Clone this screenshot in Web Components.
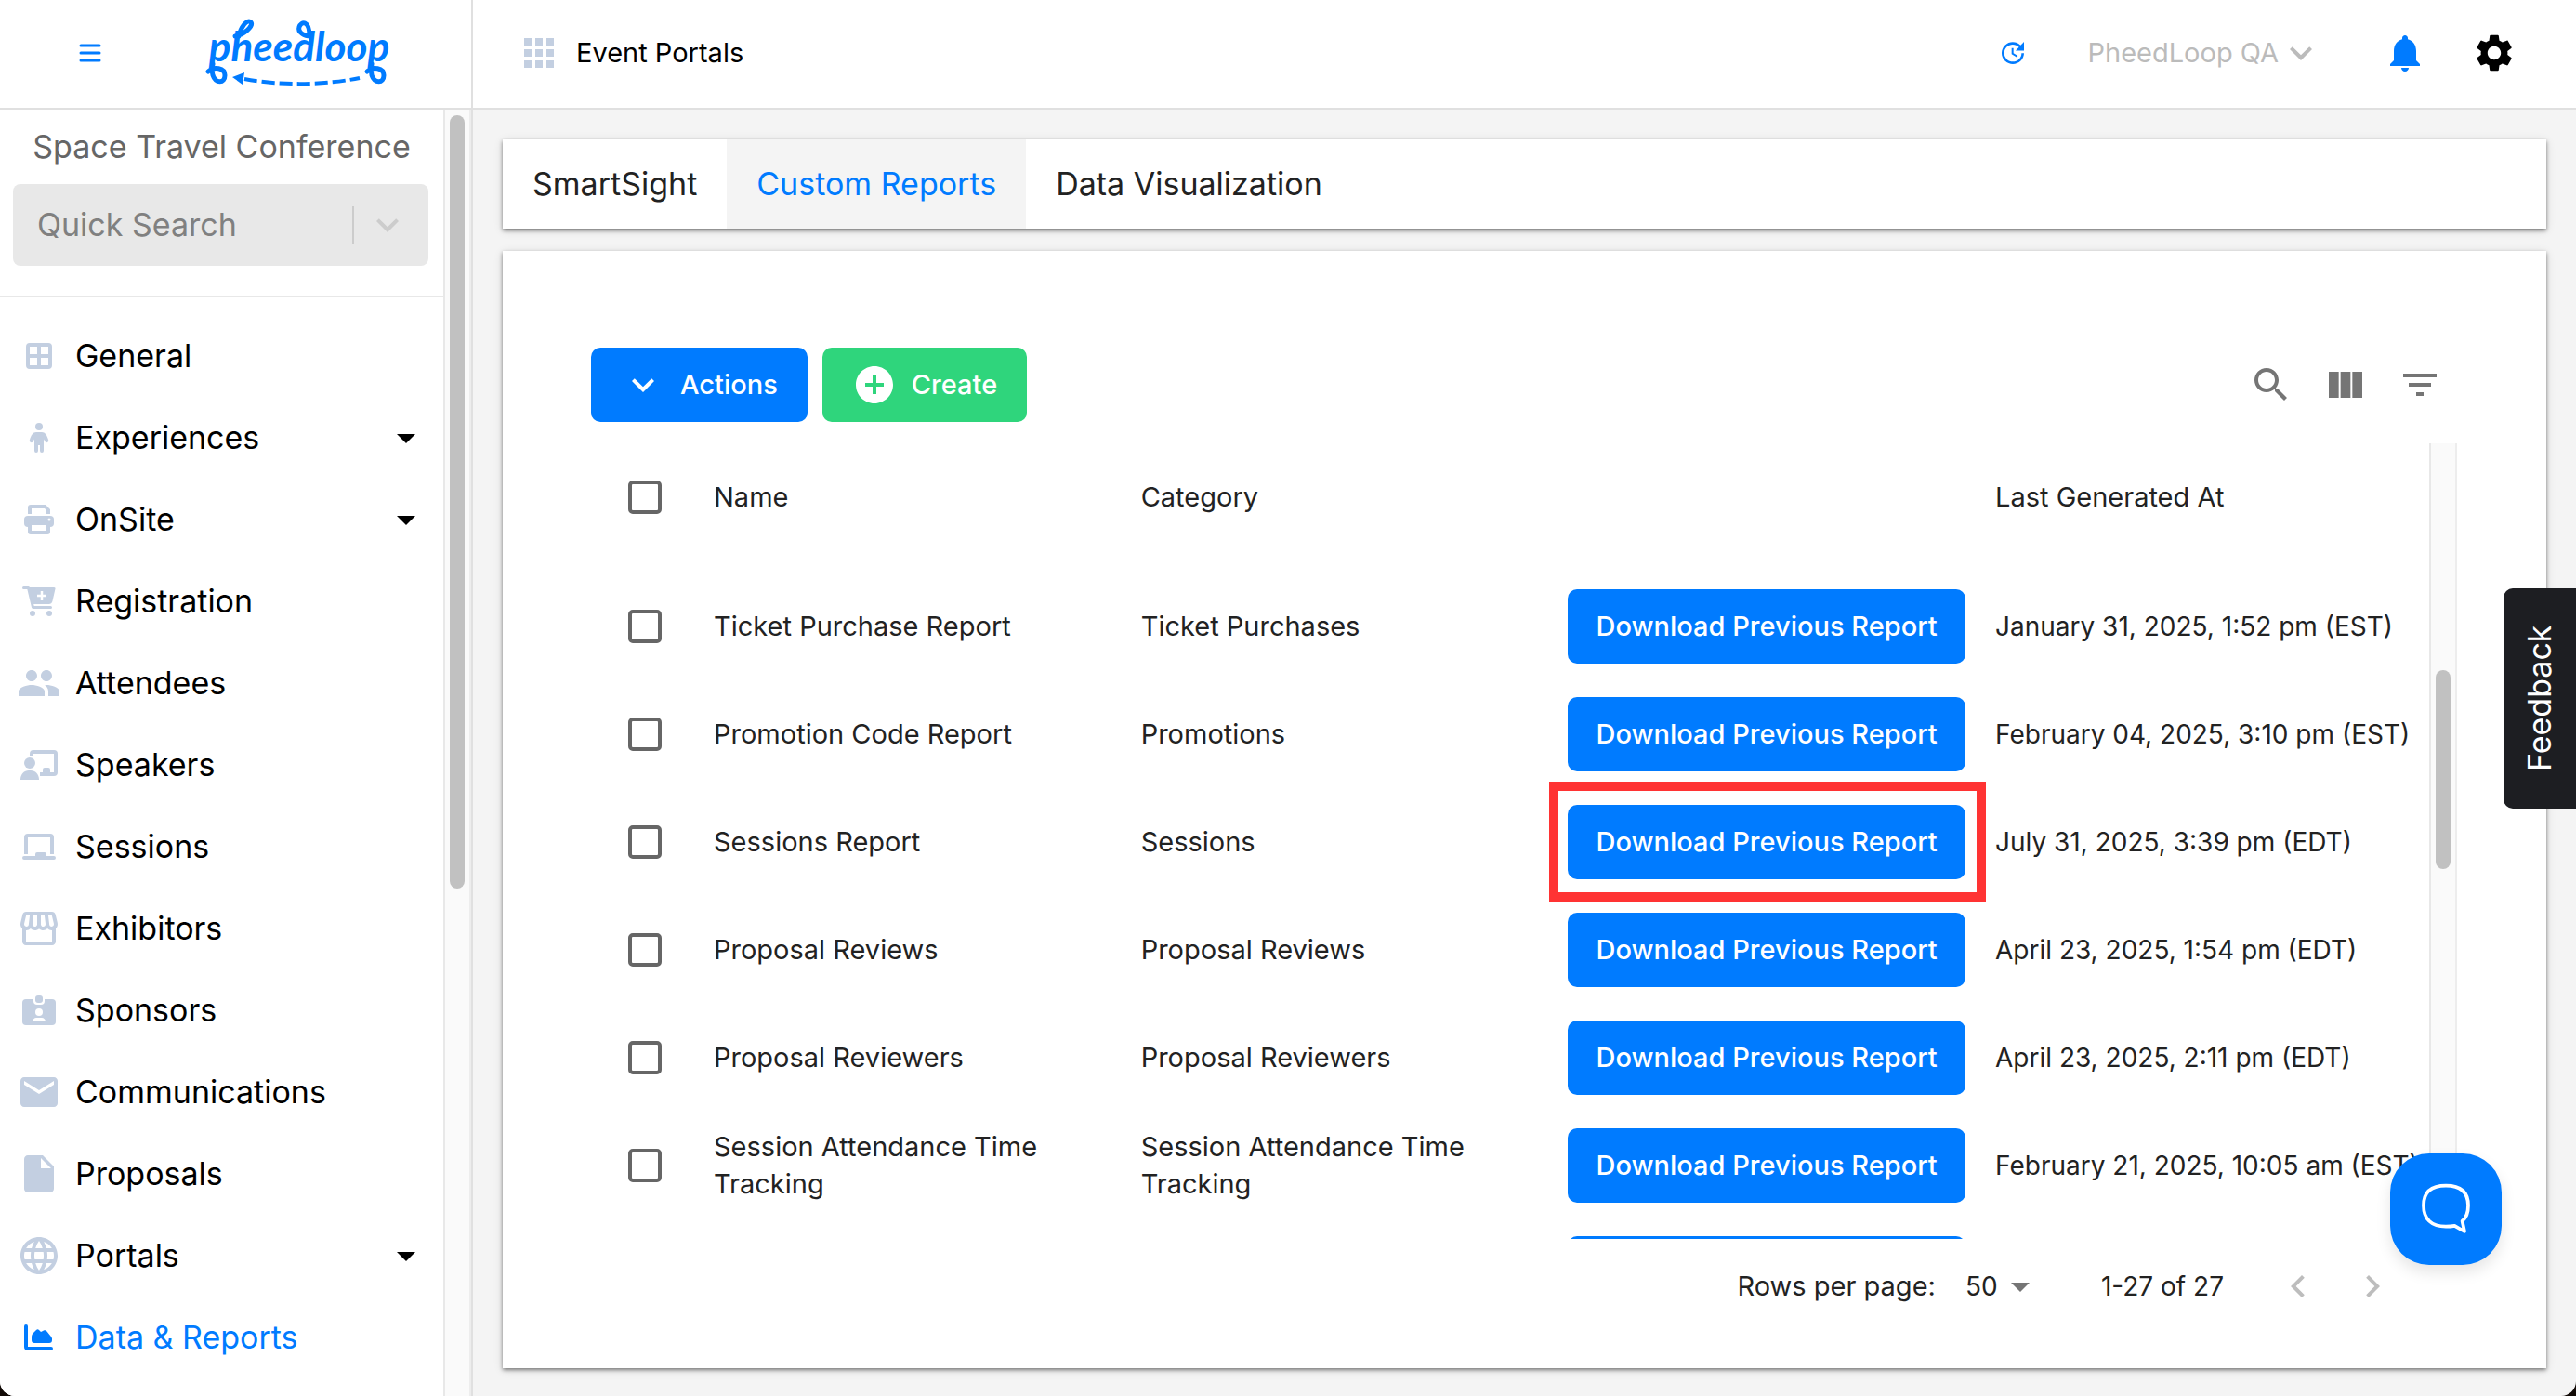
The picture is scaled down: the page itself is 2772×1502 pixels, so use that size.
<!DOCTYPE html>
<html lang="en">
<head>
<meta charset="utf-8">
<meta name="viewport" content="width=device-width, initial-scale=1">
<title>Custom Reports</title>
<style>
html, body{
    margin: 0;
    height: 100%;
    background: #120a06;
}
body{
    font-family: Inter, "Open Sans", sans-serif;
    font-size: 29px;
    line-height: 40px;
    color: #222;
    --blue: #007bff;
    --green: #2fd57c;
    --line: #e0e0e0;
    --muted: #c3cfe1;
}
</style>
</head>
<body>
<event-app></event-app>

<script>
const icons = {
    menu: '<path d="M2 4h20M2 12h20M2 20h20" stroke="currentColor" stroke-width="3" stroke-linecap="round"/>',
    general: '<g transform="scale(.5)" fill="none" stroke="currentColor" stroke-width="4"><rect x="12" y="12" width="24" height="24" rx="2"/><path d="M24 12v24M12 24h24"/></g>',
    person: '<g transform="scale(.5)"><circle cx="24" cy="12" r="4"/><path d="M21 18h6c3.500 0 5.500 3 7 8a2 2 0 0 1-3.400 2.200L29 25.500V38a2 2 0 0 1-4 0v-6h-2v6a2 2 0 0 1-4 0V25.500l-1.600 2.700a2 2 0 0 1-3.400-2.200c1.500-5 3.500-8 7-8z"/></g>',
    printer: '<g transform="scale(.5)"><path d="M12 18v-7a3 3 0 0 1 3-3h16l5 5v5h-4v-4l-2-2H16v6z"/><rect x="8" y="20" width="32" height="12" rx="4"/><rect x="12" y="26" width="24" height="14" rx="3"/><path d="M16 30h16v6H16z" fill="#fff"/><circle cx="35" cy="24" r="1.500" fill="#fff"/></g>',
    cart: '<g transform="scale(.5)"><path d="M7.500 9.500h5l5 21h19" fill="none" stroke="currentColor" stroke-width="3" stroke-linecap="round" stroke-linejoin="round"/><path d="M12 9h28a1.500 1.500 0 0 1 1.400 2l-3 13a4 4 0 0 1-4 3H16z"/><path d="M27 13v10M22 18h10" stroke="#fff" stroke-width="2.500"/><circle cx="17" cy="37" r="3"/><circle cx="35" cy="37" r="3"/></g>',
    people: '<path d="M16 11c1.660 0 2.990-1.340 2.990-3S17.660 5 16 5c-1.660 0-3 1.340-3 3s1.340 3 3 3zm-8 0c1.660 0 2.990-1.340 2.990-3S9.660 5 8 5C6.340 5 5 6.340 5 8s1.340 3 3 3zm0 2c-2.330 0-7 1.170-7 3.500V19h14v-2.500c0-2.330-4.670-3.500-7-3.500zm8 0c-.29 0-.62.02-.97.05 1.160.84 1.970 1.970 1.970 3.450V19h6v-2.500c0-2.330-4.670-3.500-7-3.500z"/>',
    speaker: '<g transform="scale(.5)"><path d="M16 14v-2a2 2 0 0 1 2-2h22a2 2 0 0 1 2 2v20a2 2 0 0 1-2 2H25" fill="none" stroke="currentColor" stroke-width="4"/><path d="M28 33v-4a2 2 0 0 1 2-2h4a2 2 0 0 1 2 2v4z"/><circle cx="14" cy="22" r="6"/><path d="M4 40c0-6 4-10 9-10h2c5 0 9 4 9 10z"/></g>',
    laptop: '<g transform="scale(.5)"><path d="M10 32V14a2 2 0 0 1 2-2h24a2 2 0 0 1 2 2v18M8 36h32" fill="none" stroke="currentColor" stroke-width="4"/><path d="M8 34h32a2 2 0 0 1 0 4H8a2 2 0 0 1 0-4zM20 35v-3a2 2 0 0 1 2-2h8a2 2 0 0 1 2 2v3z"/></g>',
    store: '<path d="M21.900 8.890l-1.050-4.370c-.22-.9-1-1.520-1.910-1.520H5.050c-.9 0-1.690.63-1.900 1.520L2.100 8.890c-.24 1.020-.02 2.060.62 2.880.08.11.19.19.28.29V19c0 1.100.9 2 2 2h14c1.100 0 2-.9 2-2v-6.940c.09-.09.2-.18.28-.28.64-.82.87-1.870.62-2.890zm-2.990-3.900l1.050 4.370c.1.42.01.84-.25 1.170-.14.18-.44.47-.94.47-.61 0-1.140-.49-1.210-1.140L16.980 5l1.930-.01zM13 5h1.960l.54 4.520c.05.39-.07.78-.33 1.070-.22.26-.54.41-.95.41-.67 0-1.220-.59-1.220-1.310V5zM8.490 9.520L9.040 5H11v4.690c0 .72-.55 1.310-1.290 1.310-.34 0-.65-.15-.89-.41-.25-.29-.37-.68-.33-1.070zm-4.450-.16L5.050 5h1.970l-.58 4.860c-.08.65-.6 1.140-1.210 1.140-.49 0-.8-.29-.93-.47-.27-.32-.36-.75-.26-1.170zM5 19v-6.030c.08.01.15.03.23.03.87 0 1.660-.36 2.240-.95.6.6 1.400.95 2.310.95.87 0 1.650-.36 2.230-.93.59.57 1.390.93 2.290.93.84 0 1.640-.35 2.240-.95.58.59 1.370.95 2.240.95.08 0 .15-.02.23-.03V19H5z"/>',
    badge: '<g transform="scale(.5)"><rect x="6" y="12" width="36" height="28" rx="4"/><rect x="18" y="8" width="12" height="10" rx="4" fill="#fff"/><rect x="20" y="8" width="8" height="8" rx="3"/><circle cx="24" cy="26" r="4" fill="#fff"/><path d="M17 36c0-2 2-4 4-4h6c2 0 4 2 4 4z" fill="#fff"/></g>',
    mail: '<path d="M20 4H4c-1.100 0-1.990.9-1.990 2L2 18c0 1.100.9 2 2 2h16c1.100 0 2-.9 2-2V6c0-1.100-.9-2-2-2zm0 4l-8 5-8-5V6l8 5 8-5v2z"/>',
    file: '<path d="M6 2c-1.100 0-1.990.9-1.990 2L4 20c0 1.100.89 2 1.990 2H18c1.100 0 2-.9 2-2V8l-6-6H6zm7 7V3.500L18.500 9H13z"/>',
    globe: '<path d="M11.990 2C6.470 2 2 6.480 2 12s4.470 10 9.990 10C17.520 22 22 17.520 22 12S17.520 2 11.990 2zm6.930 6h-2.950c-.32-1.250-.78-2.450-1.380-3.560 1.840.63 3.370 1.910 4.330 3.560zM12 4.040c.83 1.200 1.480 2.530 1.910 3.960h-3.820c.43-1.430 1.080-2.760 1.910-3.960zM4.260 14C4.100 13.360 4 12.690 4 12s.1-1.360.26-2h3.380c-.08.66-.14 1.320-.14 2 0 .68.06 1.340.14 2H4.260zm.82 2h2.950c.32 1.250.78 2.450 1.380 3.560-1.840-.63-3.370-1.900-4.330-3.560zm2.950-8H5.080c.96-1.660 2.490-2.930 4.330-3.560C8.810 5.550 8.350 6.750 8.030 8zM12 19.960c-.83-1.200-1.480-2.530-1.910-3.960h3.820c-.43 1.430-1.080 2.760-1.910 3.960zM14.340 14H9.660c-.09-.66-.16-1.320-.16-2 0-.68.07-1.350.16-2h4.680c.09.65.16 1.320.16 2 0 .68-.07 1.340-.16 2zm.25 5.560c.6-1.110 1.060-2.310 1.380-3.560h2.950c-.96 1.650-2.490 2.930-4.330 3.560zM16.360 14c.08-.66.14-1.320.14-2 0-.68-.06-1.340-.14-2h3.380c.16.64.26 1.310.26 2s-.1 1.360-.26 2h-3.380z"/>',
    chart: '<g transform="scale(.5)"><path d="M10 12v22a2 2 0 0 0 2 2h25" fill="none" stroke="currentColor" stroke-width="4" stroke-linecap="round"/><path d="M16 27v-4c0-1 .5-2 1-3l4-4c1-1 2-1 3 0l2 2 3-1.500c1-.5 2.500-.3 3.500 1l4 5c.8 1 1.500 2 1.500 3v1.500a3 3 0 0 1-3 3H19a3 3 0 0 1-3-3z"/></g>',
    caret: '<path d="M7 10l5 5 5-5z"/>',
    grid: '<path d="M4 4h4v4H4zM10 4h4v4h-4zM16 4h4v4h-4zM4 10h4v4H4zM10 10h4v4h-4zM16 10h4v4h-4zM4 16h4v4H4zM10 16h4v4h-4zM16 16h4v4h-4z"/>',
    update: '<path d="M21 10.120h-6.780l2.740-2.820c-2.730-2.700-7.150-2.800-9.880-.1-2.730 2.710-2.730 7.080 0 9.790s7.150 2.710 9.880 0C18.320 15.650 19 14.080 19 12.100h2c0 1.980-.88 4.550-2.640 6.290-3.510 3.480-9.210 3.480-12.720 0-3.500-3.470-3.530-9.110-.02-12.580s9.140-3.470 12.650 0L21 3v7.120zM12.500 8v4.250l3.500 2.080-.72 1.210L11 13V8h1.500z"/>',
    expand: '<path d="M16.590 8.590L12 13.170 7.410 8.590 6 10l6 6 6-6z"/>',
    bell: '<path d="M12 22c1.100 0 2-.9 2-2h-4c0 1.100.89 2 2 2zm6-6v-5c0-3.070-1.640-5.640-4.500-6.320V4c0-.83-.67-1.500-1.500-1.500s-1.500.67-1.500 1.500v.68C7.630 5.360 6 7.920 6 11v5l-2 2v1h16v-1l-2-2z"/>',
    gear: '<path d="M19.140 12.940c.04-.3.06-.61.06-.94 0-.32-.02-.64-.07-.94l2.030-1.580c.18-.14.23-.41.12-.61l-1.920-3.320c-.12-.22-.37-.29-.59-.22l-2.390.96c-.5-.38-1.030-.7-1.620-.94l-.36-2.540c-.04-.24-.24-.41-.48-.41h-3.840c-.24 0-.43.17-.47.41l-.36 2.540c-.59.24-1.130.57-1.620.94l-2.390-.96c-.22-.08-.47 0-.59.22L2.740 8.870c-.12.21-.08.47.12.61l2.030 1.580c-.05.3-.09.63-.09.94s.02.64.07.94l-2.030 1.580c-.18.14-.23.41-.12.61l1.920 3.320c.12.22.37.29.59.22l2.390-.96c.5.38 1.030.7 1.620.94l.36 2.540c.05.24.24.41.48.41h3.840c.24 0 .44-.17.47-.41l.36-2.540c.59-.24 1.130-.56 1.620-.94l2.390.96c.22.08.47 0 .59-.22l1.920-3.320c.12-.22.07-.47-.12-.61l-2.010-1.580zM12 15.600c-1.980 0-3.600-1.620-3.600-3.600s1.620-3.600 3.600-3.600 3.600 1.620 3.600 3.600-1.620 3.600-3.600 3.600z"/>',
    plus: '<path d="M12 2C6.480 2 2 6.480 2 12s4.480 10 10 10 10-4.480 10-10S17.520 2 12 2zm5 11h-4v4h-2v-4H7v-2h4V7h2v4h4v2z"/>',
    search: '<path d="M15.500 14h-.79l-.28-.27C15.410 12.590 16 11.110 16 9.500 16 5.910 13.090 3 9.500 3S3 5.910 3 9.500 5.910 16 9.500 16c1.610 0 3.090-.59 4.230-1.570l.27.28v.79l5 4.990L20.490 19l-4.990-5zm-6 0C7.010 14 5 11.990 5 9.500S7.010 5 9.500 5 14 7.010 14 9.500 11.990 14 9.500 14z"/>',
    columns: '<path d="M14.670 5v14H9.330V5h5.340zm1 14H21V5h-5.330v14zm-7.340 0V5H3v14h5.330z"/>',
    filter: '<path d="M10 18h4v-2h-4v2zM3 6v2h18V6H3zm3 7h12v-2H6v2z"/>',
    prev: '<path d="M15.410 7.410L14 6l-6 6 6 6 1.410-1.410L10.830 12z"/>',
    next: '<path d="M10 6L8.590 7.410 13.170 12l-4.580 4.590L10 18l6-6z"/>',
    chat: '<path d="M12 2.500c6 0 9 2.600 9 8 0 3-.8 5-2.400 6.300l.9 4.200-4-2.300c-1 .2-2.200.3-3.500.3-6 0-9-3.100-9-8.500s3-8 9-8z" fill="none" stroke="currentColor" stroke-width="1.400" stroke-linejoin="round"/>'
}

const reset = `
*{ box-sizing: border-box; }
button, input, select{
    font: inherit;
    color: inherit;
    border: 0;
    margin: 0;
    padding: 0;
    background: none;
}
button{ cursor: pointer; }
a{
    color: inherit;
    text-decoration: none;
}
`

class BaseElement extends HTMLElement {
    constructor() {
        super()
        this.attachShadow({ mode: 'open' })
    }

    draw(style, markup) {
        this.shadowRoot.innerHTML = `<style>${reset}${style}</style>${markup}`
    }
}

class AppIcon extends BaseElement {
    connectedCallback() {
        const size = this.getAttribute('size') || 48
        this.draw(`
        :host{
            display: block;
            flex: none;
            width: ${size}px;
            height: ${size}px;
        }
        svg{ display: block; }
        `, `<svg width="${size}" height="${size}" viewBox="0 0 24 24" fill="currentColor" aria-hidden="true">${icons[this.getAttribute('name')]}</svg>`)
    }
}

class AppLogo extends BaseElement {
    connectedCallback() {
        this.draw(`
        :host{
            display: block;
            color: var(--blue);
        }
        svg{ display: block; }
        text{
            font-family: Lato, sans-serif;
            font-size: 44px;
            font-weight: 700;
            font-style: italic;
        }
        `, `
        <svg width="200" height="74" viewBox="0 0 200 74" fill="currentColor">
            <text x="101" y="46" text-anchor="middle">pheedloop</text>
            <g fill="none" stroke="currentColor" stroke-width="5" stroke-linecap="round" stroke-linejoin="round">
                <path d="M3 57c6-6 18-4 18 4 0 9-10 9-13 0-1-4-1-8 0-12"/>
                <path d="M174 57c6-6 18-4 18 4 0 9-10 9-13 0-1-4-1-8 0-12"/>
                <path d="M32 19c9-1 20-11 17-15-4-4-11 5-13 15"/>
                <path d="M113 19c-6 0-14-4-12-10s11-8 11 10"/>
                <path d="M42 65c38 7 84 7 124-1" stroke-width="4" stroke-linecap="butt" stroke-dasharray="14 5"/>
            </g>
            <path d="M29 63l13-5-2 13z"/>
        </svg>`)
    }
}

class ScrollTrack extends BaseElement {
    connectedCallback() {
        this.draw(`
        :host{
            display: grid;
            grid-template-rows: var(--before) var(--thumb) 1fr;
            justify-items: center;
            flex: none;
            box-sizing: border-box;
            width: 30px;
            background: #fafafa;
            border-left: 2px solid #e8e8e8;
            border-right: 2px solid #ededed;
        }
        .thumb{
            grid-row: 2;
            width: 16px;
            border-radius: 8px;
            background: #c1c1c1;
        }
        `, `<div class="thumb"></div>`)
    }
}

class NavItem extends BaseElement {
    connectedCallback() {
        const caret = this.hasAttribute('group') ? '<app-icon name="caret" class="caret"></app-icon>' : ''
        this.draw(`
        :host{
            display: block;
            color: #000;
            font-size: 34px;
        }
        a{
            display: flex;
            align-items: center;
            gap: 15px;
            height: 88px;
            padding: 0 16px 0 18px;
        }
        .icon{ color: var(--muted); }
        .caret{ margin-left: auto; }
        :host([active]), :host([active]) .icon{ color: var(--blue); }
        `, `<a href="#"><app-icon class="icon" name="${this.getAttribute('icon')}"></app-icon><slot></slot>${caret}</a>`)
    }
}

class AppSidebar extends BaseElement {
    connectedCallback() {
        this.draw(`
        :host{
            display: flex;
            min-height: 0;
            background: #fff;
            border-right: 2px solid var(--line);
            overflow: hidden;
        }
        .content{
            flex: 1;
            min-width: 0;
        }
        h2{
            margin: 0;
            font-size: 34px;
            font-weight: 400;
            line-height: 80px;
            text-align: center;
            color: #666;
        }
        .search{
            display: flex;
            align-items: center;
            height: 88px;
            margin: 0 16px 32px 14px;
            padding: 0 20px 0 26px;
            border-radius: 8px;
            background: #e8e8e8;
            color: #ccc;
            font-size: 34px;
        }
        input{
            flex: 1;
            min-width: 0;
            outline: 0;
            color: #808080;
        }
        input::placeholder{
            color: #808080;
            opacity: 1;
        }
        .divider{
            width: 2px;
            height: 40px;
            margin-right: 12px;
            background: #ccc;
        }
        nav{
            padding-top: 19px;
            border-top: 2px solid #e8e8e8;
        }
        scroll-track{
            --before: 6px;
            --thumb: 832px;
        }
        `, `
        <div class="content">
            <h2>Space Travel Conference</h2>
            <div class="search">
                <input type="text" placeholder="Quick Search" aria-label="Quick Search">
                <span class="divider"></span>
                <app-icon name="expand"></app-icon>
            </div>
            <nav>
                <nav-item icon="general">General</nav-item>
                <nav-item icon="person" group>Experiences</nav-item>
                <nav-item icon="printer" group>OnSite</nav-item>
                <nav-item icon="cart">Registration</nav-item>
                <nav-item icon="people">Attendees</nav-item>
                <nav-item icon="speaker">Speakers</nav-item>
                <nav-item icon="laptop">Sessions</nav-item>
                <nav-item icon="store">Exhibitors</nav-item>
                <nav-item icon="badge">Sponsors</nav-item>
                <nav-item icon="mail">Communications</nav-item>
                <nav-item icon="file">Proposals</nav-item>
                <nav-item icon="globe" group>Portals</nav-item>
                <nav-item icon="chart" active>Data &amp; Reports</nav-item>
            </nav>
        </div>
        <scroll-track></scroll-track>`)
    }
}

class AppHeader extends BaseElement {
    connectedCallback() {
        this.draw(`
        :host{
            display: grid;
            grid-template-columns: 509px 1fr;
            height: 118px;
            background: #fff;
            border-bottom: 2px solid var(--line);
            box-sizing: border-box;
        }
        .brand{
            display: flex;
            align-items: center;
            gap: 112px;
            padding: 0 0 2px 85px;
            border-right: 2px solid var(--line);
        }
        .bar{
            display: flex;
            align-items: center;
            padding: 0 64px 2px 47px;
        }
        .portals{
            display: flex;
            align-items: center;
            gap: 16px;
            color: #000;
        }
        .portals app-icon{ color: var(--muted); }
        .menu, .refresh, .bell{ color: var(--blue); }
        .refresh{ margin: 0 64px 0 auto; }
        .account{
            display: flex;
            align-items: center;
            margin-right: 64px;
            color: #bbb;
        }
        .bell{ margin-right: 48px; }
        .gear{ color: #000; }
        `, `
        <div class="brand">
            <button class="menu" aria-label="Menu"><app-icon name="menu" size="24"></app-icon></button>
            <app-logo></app-logo>
        </div>
        <div class="bar">
            <a class="portals" href="#"><app-icon name="grid"></app-icon>Event Portals</a>
            <button class="refresh" aria-label="Refresh"><app-icon name="update" size="32"></app-icon></button>
            <button class="account">PheedLoop QA<app-icon name="expand"></app-icon></button>
            <button class="bell" aria-label="Notifications"><app-icon name="bell"></app-icon></button>
            <button class="gear" aria-label="Settings"><app-icon name="gear"></app-icon></button>
        </div>`)
    }
}

class TabBar extends BaseElement {
    connectedCallback() {
        this.draw(`
        :host{
            display: flex;
            height: 96px;
            flex: none;
            background: #fff;
            font-size: 34px;
            box-shadow: 0 2px 4px rgba(0,0,0,.45), 0 2px 10px rgba(0,0,0,.12);
        }
        a{
            display: flex;
            align-items: center;
            padding: 0 32px;
        }
        .active{
            color: var(--blue);
            background: #f4f4f4;
        }
        `, `
        <a href="#">SmartSight</a>
        <a href="#" class="active">Custom Reports</a>
        <a href="#">Data Visualization</a>`)
    }
}

class AppButton extends BaseElement {
    connectedCallback() {
        const icon = this.getAttribute('icon')
        const label = this.getAttribute('label')
        this.draw(`
        :host{
            display: block;
            font-weight: 500;
        }
        button{
            display: flex;
            align-items: center;
            justify-content: center;
            gap: 16px;
            width: 100%;
            height: 80px;
            padding: 0 32px;
            border-radius: 10px;
            background: var(--blue);
            color: #fff;
            white-space: nowrap;
        }
        :host([color="green"]) button{ background: var(--green); }
        `, `<button ${label ? `aria-label="${label}"` : ''}>${icon ? `<app-icon name="${icon}"></app-icon>` : ''}<slot></slot></button>`)
    }
}

class ReportToolbar extends BaseElement {
    connectedCallback() {
        this.draw(`
        :host{
            display: flex;
            align-items: center;
            gap: 16px;
        }
        .tools{
            display: flex;
            margin-left: auto;
            color: #757575;
        }
        .tools button{ padding: 16px; }
        `, `
        <app-button icon="expand">Actions</app-button>
        <app-button icon="plus" color="green">Create</app-button>
        <div class="tools">
            <button aria-label="Search"><app-icon name="search"></app-icon></button>
            <button aria-label="View Columns"><app-icon name="columns"></app-icon></button>
            <button aria-label="Filter Table"><app-icon name="filter"></app-icon></button>
        </div>`)
    }
}

const reports = [
    ['Ticket Purchase Report', 'Ticket Purchases', 'January 31, 2025, 1:52 pm (EST)'],
    ['Promotion Code Report', 'Promotions', 'February 04, 2025, 3:10 pm (EST)'],
    ['Sessions Report', 'Sessions', 'July 31, 2025, 3:39 pm (EDT)', true],
    ['Proposal Reviews', 'Proposal Reviews', 'April 23, 2025, 1:54 pm (EDT)'],
    ['Proposal Reviewers', 'Proposal Reviewers', 'April 23, 2025, 2:11 pm (EDT)'],
    ['Session Attendance Time Tracking', 'Session Attendance Time Tracking', 'February 21, 2025, 10:05 am (EST)']
]

class ReportTable extends BaseElement {
    connectedCallback() {
        const rows = reports.map(([name, category, date, marked]) => `
            <tr>
                <td class="check"><input type="checkbox" aria-label="Select ${name}"></td>
                <td>${name}</td>
                <td>${category}</td>
                <td class="action"><div class="${marked ? 'marked' : ''}"><app-button>Download Previous Report</app-button></div></td>
                <td class="date">${date}</td>
            </tr>`).join('')
        this.draw(`
        :host{
            display: flex;
            min-height: 0;
        }
        .scroller{
            flex: 1;
            min-width: 0;
            overflow: hidden;
        }
        table{
            width: 100%;
            table-layout: fixed;
            border-collapse: collapse;
        }
        .check-col{ width: 100px; }
        .date-col{ width: 499px; }
        th{
            height: 139px;
            padding: 0 0 24px 32px;
            font-weight: 400;
            text-align: left;
        }
        td{
            height: 116px;
            padding: 0 32px;
        }
        th.check, td.check{
            padding-left: 40px;
            padding-right: 0;
        }
        td.action{ padding-right: 0; }
        td.date{
            padding-right: 0;
            font-size: 28px;
            white-space: nowrap;
        }
        input{
            display: block;
            appearance: none;
            width: 36px;
            height: 36px;
            border: 4px solid #666;
            border-radius: 5px;
        }
        .marked{ position: relative; }
        .marked::after{
            content: "";
            position: absolute;
            inset: -25px -22px -24px -20px;
            border: 10px solid #f33;
            pointer-events: none;
        }
        scroll-track{
            --before: 244px;
            --thumb: 214px;
        }
        `, `
        <div class="scroller">
            <table>
                <colgroup><col class="check-col"><col><col><col><col class="date-col"></colgroup>
                <thead>
                    <tr>
                        <th class="check"><input type="checkbox" aria-label="Select all"></th>
                        <th>Name</th>
                        <th>Category</th>
                        <th></th>
                        <th>Last Generated At</th>
                    </tr>
                </thead>
                <tbody>
                    ${rows}
                    <tr>
                        <td></td>
                        <td></td>
                        <td></td>
                        <td class="action"><app-button label="Download"></app-button></td>
                        <td></td>
                    </tr>
                </tbody>
            </table>
        </div>
        <scroll-track></scroll-track>`)
    }
}

class TablePager extends BaseElement {
    connectedCallback() {
        this.draw(`
        :host{
            display: flex;
            align-items: center;
            justify-content: flex-end;
            height: 102px;
            padding-right: 51px;
        }
        .size{
            display: grid;
            align-items: center;
            margin: 0 63px 0 32px;
        }
        select, .size app-icon{ grid-area: 1 / 1; }
        select{
            appearance: none;
            height: 48px;
            padding-right: 48px;
            outline: 0;
        }
        .size app-icon{
            justify-self: end;
            color: #757575;
            pointer-events: none;
        }
        .size, .range{ font-size: 28px; }
        .range{ margin-right: 40px; }
        button{
            padding: 16px;
            color: #bdbdbd;
        }
        `, `
        <label for="size">Rows per page:</label>
        <div class="size">
            <select id="size"><option>50</option></select>
            <app-icon name="caret"></app-icon>
        </div>
        <span class="range">1-27 of 27</span>
        <button aria-label="Previous page" disabled><app-icon name="prev"></app-icon></button>
        <button aria-label="Next page" disabled><app-icon name="next"></app-icon></button>`)
    }
}

class FeedbackTab extends BaseElement {
    connectedCallback() {
        this.draw(`
        :host{
            position: fixed;
            right: 0;
            top: 633px;
            z-index: 5;
        }
        button{
            width: 78px;
            height: 237px;
            border-radius: 0 10px 10px 0;
            background: #1d1e22;
            color: #fff;
            font-size: 34px;
            writing-mode: vertical-rl;
            transform: rotate(180deg);
        }
        `, `<button>Feedback</button>`)
    }
}

class ChatLauncher extends BaseElement {
    connectedCallback() {
        this.draw(`
        :host{
            position: fixed;
            right: 80px;
            bottom: 141px;
            z-index: 6;
        }
        button{
            display: grid;
            place-items: center;
            width: 120px;
            height: 120px;
            border-radius: 42px;
            background: var(--blue);
            color: #fff;
            box-shadow: 0 8px 16px rgba(0,0,0,.1);
        }
        `, `<button aria-label="Chat"><app-icon name="chat" size="64"></app-icon></button>`)
    }
}

class EventApp extends BaseElement {
    connectedCallback() {
        this.draw(`
        :host{
            display: grid;
            grid-template-columns: 509px 1fr;
            grid-template-rows: 118px 1fr;
            height: 100vh;
            background: #f4f4f4;
            border-radius: 0 0 16px 16px;
            overflow: hidden;
        }
        app-header{ grid-column: 1 / -1; }
        main{
            display: flex;
            flex-direction: column;
            gap: 24px;
            min-width: 0;
            min-height: 0;
            padding: 32px 32px 30px;
        }
        .card{
            display: flex;
            flex-direction: column;
            flex: 1;
            min-height: 0;
            padding: 104px 96px 37px 95px;
            background: #fff;
            box-shadow: 0 2px 4px rgba(0,0,0,.45), 0 2px 10px rgba(0,0,0,.12);
        }
        report-table{
            flex: 1;
            margin-top: 23px;
        }
        `, `
        <app-header></app-header>
        <app-sidebar></app-sidebar>
        <main>
            <tab-bar></tab-bar>
            <section class="card">
                <report-toolbar></report-toolbar>
                <report-table></report-table>
                <table-pager></table-pager>
            </section>
        </main>
        <feedback-tab></feedback-tab>
        <chat-launcher></chat-launcher>`)
    }
}

customElements.define('app-icon', AppIcon)
customElements.define('app-logo', AppLogo)
customElements.define('scroll-track', ScrollTrack)
customElements.define('nav-item', NavItem)
customElements.define('app-sidebar', AppSidebar)
customElements.define('app-header', AppHeader)
customElements.define('tab-bar', TabBar)
customElements.define('app-button', AppButton)
customElements.define('report-toolbar', ReportToolbar)
customElements.define('report-table', ReportTable)
customElements.define('table-pager', TablePager)
customElements.define('feedback-tab', FeedbackTab)
customElements.define('chat-launcher', ChatLauncher)
customElements.define('event-app', EventApp)
</script>
</body>
</html>
